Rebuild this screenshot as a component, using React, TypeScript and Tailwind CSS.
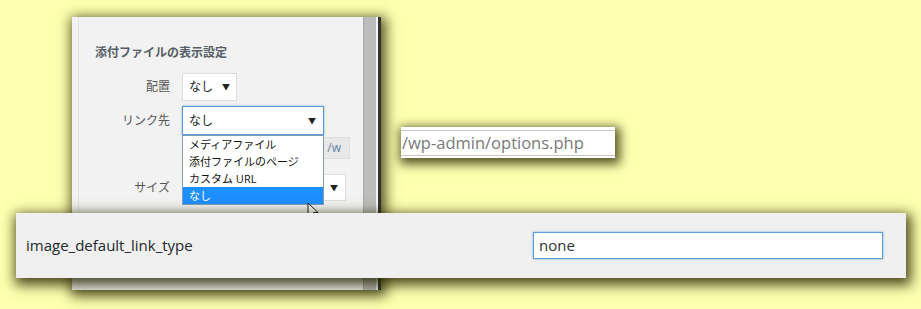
export default function App() {
  return (
    <div className="relative w-[921px] h-[309px] overflow-hidden bg-[#ffffb0] font-['Open_Sans','Noto_Sans_CJK_JP',sans-serif]">
      {/* settings panel cut-out */}
      <div className="absolute left-[72px] top-[17px] w-[309px] h-[273px] flex shadow-[2px_3px_12px_3px_rgba(40,40,0,0.8)]">
        <div className="relative flex-1 bg-[#f2f2f2] pl-[6px]">
          <div className="h-full border-l border-[#e2e2e2] flex flex-col">
            <h3 className="mt-[27px] ml-[16px] text-[12px] leading-[18px] font-bold text-[#555d66]">
              添付ファイルの表示設定
            </h3>

            <div className="mt-[11px] flex items-center gap-[12px]">
              <span className="w-[91px] text-right text-[12px] text-[#555]">配置</span>
              <div className="w-[55px] h-[28px] bg-white border border-[#dddddd] flex items-center justify-between px-[6px] text-[12px] text-[#222]">
                <span>なし</span>
                <span className="text-[8px]">▼</span>
              </div>
            </div>

            <div className="mt-[5px] flex items-center gap-[12px]">
              <span className="w-[91px] text-right text-[12px] text-[#555]">リンク先</span>
              <div className="relative w-[142px] h-[29px] bg-white border border-[#5b9dd9] shadow-[0_0_2px_rgba(30,140,190,0.6)] flex items-center justify-between px-[6px] text-[12px] text-[#222]">
                <span>なし</span>
                <span className="text-[8px] pr-[1px]">▼</span>
                <ul className="absolute z-10 left-[-1px] top-[28px] w-[142px] bg-white border border-[#7f9db9] text-[11px] leading-[17px] text-[#111]">
                  <li className="px-[6px]">メディアファイル</li>
                  <li className="px-[6px]">添付ファイルのページ</li>
                  <li className="px-[6px]">カスタム URL</li>
                  <li className="px-[6px] bg-[#1e8fff] text-white">なし</li>
                </ul>
              </div>
            </div>

            <div className="mt-[2px] ml-[109px] w-[162px] h-[22px] bg-[#e8e8e8] border border-[#dcdcdc] flex items-center justify-end pr-[8px] text-[12px] text-[#5d82a8]">
              /w
            </div>

            <div className="mt-[15px] flex items-center gap-[12px]">
              <span className="w-[91px] text-right text-[12px] text-[#555]">サイズ</span>
              <div className="w-[164px] h-[27px] bg-white border border-[#dddddd] flex items-center justify-end px-[7px] text-[12px] text-[#222]">
                <span className="text-[8px]">▼</span>
              </div>
            </div>
          </div>

          <svg className="absolute left-[235px] top-[185px] z-20" width="14" height="20" viewBox="0 0 14 20">
            <path d="M1 1 L1 15 L4.5 11.5 L7 17 L9 16 L6.5 10.5 L11 10.5 Z" fill="white" stroke="#111" strokeWidth="1" />
          </svg>
        </div>
        <div className="w-[13px] bg-[#bcbcbc] border-l border-[#a8a8a8]" />
        <div className="w-[2px] bg-[#f4f4f4]" />
        <div className="w-[3px] bg-[#333]" />
      </div>

      {/* url cut-out */}
      <div className="absolute left-[401px] top-[127px] w-[214px] h-[31px] bg-white overflow-hidden shadow-[2px_3px_10px_3px_rgba(40,40,0,0.8)] flex flex-col">
        <div className="mt-[3px] h-[1px] bg-[#c8c8c8]" />
        <div className="flex-1 flex items-center pl-[1px] text-[16.5px] text-[#7a7a7a]">
          /wp-admin/options.php
        </div>
        <div className="mb-[2px] h-[1px] bg-[#c8c8c8]" />
      </div>

      {/* option row cut-out */}
      <div className="absolute left-[16px] top-[213px] w-[890px] h-[65px] bg-[#f0f0f0] shadow-[2px_4px_12px_3px_rgba(40,40,0,0.85)] flex items-center justify-between pl-[10px] pr-[23px] z-30">
        <span className="text-[15px] text-[#23282d]">image_default_link_type</span>
        <div className="w-[350px] h-[27px] bg-white border border-[#5b9dd9] shadow-[0_0_2px_rgba(30,140,190,0.6)] flex items-center px-[5px] text-[15px] text-[#333]">
          none
        </div>
      </div>
    </div>
  );
}
